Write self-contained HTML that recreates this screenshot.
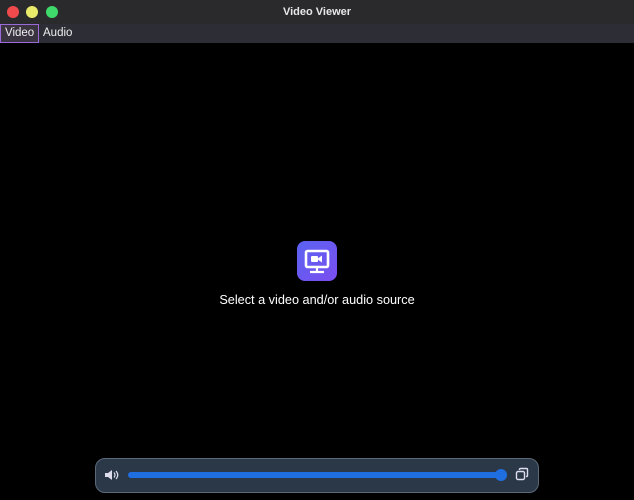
<!DOCTYPE html><html><head><style>
body{margin:0;width:634px;height:500px;background:#000;overflow:hidden;font-family:"Liberation Sans",sans-serif;position:relative}
.tb{position:absolute;left:0;top:0;width:634px;height:24px;background:#2a2a2c;color:#e8e8e8;font-size:11px;font-weight:bold;text-align:center;line-height:24px}
.d{position:absolute;top:6px;width:12px;height:12px;border-radius:50%}
.mb{position:absolute;top:24px;left:0;width:634px;height:19px;background:#2d2d35;font-size:11.5px;color:#eee}
.mi{position:absolute;top:0;height:17px;line-height:17px;padding:0 3px}
</style></head><body>
<div class="tb">Video Viewer
<div class="d" style="left:7px;background:#f04a4c"></div>
<div class="d" style="left:26px;background:#eaea6a"></div>
<div class="d" style="left:46px;background:#3fd86a"></div></div>
<div class="mb"><div class="mi" style="left:0;border:1px solid #9a6ad8;background:#3a3440;padding:0 4px">Video</div><div class="mi" style="left:40px;top:1px">Audio</div></div>
<div style="position:absolute;left:297px;top:241px;width:40px;height:40px;border-radius:8px;background:linear-gradient(135deg,#5a63f2,#7b4ef0)">
<svg width="40" height="40" viewBox="0 0 40 40"><rect x="9" y="10" width="22" height="16" rx="1.5" fill="none" stroke="#fff" stroke-width="2.6"/><rect x="14" y="15" width="7" height="6" rx="1" fill="#fff"/><path d="M20 18l5-3.5v7z" fill="#fff"/><path d="M20 26v4M13 31h14" stroke="#fff" stroke-width="2.2"/></svg></div>
<div style="position:absolute;left:0;width:634px;top:293px;text-align:center;color:#fff;font-size:12.7px">Select a video and/or audio source</div>
<div style="position:absolute;left:95px;top:458px;width:442px;height:33px;border:1px solid #5a6878;border-radius:10px;background:#2a3847"></div>
<svg style="position:absolute;left:104px;top:468px" width="16" height="14" viewBox="0 0 16 14"><path d="M1 5h3l4-3v10l-4-3H1z" fill="#dde"/><path d="M10 4.5q2 2.5 0 5M12 3q3.5 4 0 8" stroke="#dde" stroke-width="1.2" fill="none"/></svg>
<div style="position:absolute;left:128px;top:472px;width:374px;height:6px;border-radius:3px;background:#1f6fe0"></div>
<div style="position:absolute;left:495px;top:469px;width:12px;height:12px;border-radius:50%;background:#1f6fe0"></div>
<svg style="position:absolute;left:515px;top:467px" width="14" height="14" viewBox="0 0 14 14"><rect x="1.5" y="4.5" width="8" height="8" rx="1.5" fill="none" stroke="#dde" stroke-width="1.4"/><path d="M4.5 3V2.5q0-1 1-1h6q1 0 1 1v6q0 1-1 1H11" fill="none" stroke="#dde" stroke-width="1.4"/></svg>
</body></html>
